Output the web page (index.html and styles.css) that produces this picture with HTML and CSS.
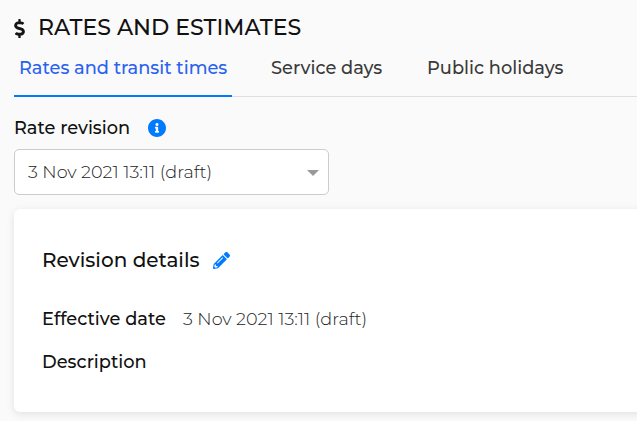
FILE: index.html
```html
<!DOCTYPE html>
<html lang="en">
<head>
	<meta charset="utf-8" />
	<title>Rates and estimates</title>
	<link rel="stylesheet" href="styles.css">
</head>
<body>

<h1 class="page-title">
	<svg class="icon-dollar" viewBox="0 0 288 512"><path d="M209.2 233.4l-108-31.6C88.7 198.2 80 186.5 80 173.5c0-16.3 13.2-29.5 29.5-29.5h66.3c12.2 0 24.2 3.7 34.2 10.5 6.1 4.1 14.3 3.1 19.5-2l34.8-34c7.1-6.9 6.1-18.4-1.8-24.5C238 74.8 207.4 64.1 176 64V16c0-8.8-7.2-16-16-16h-32c-8.8 0-16 7.2-16 16v48h-2.5C45.8 64-5.4 118.7.5 183.6c4.2 46.1 39.4 83.6 83.8 96.6l102.5 30c12.5 3.7 21.2 15.3 21.2 28.3 0 16.3-13.2 29.5-29.5 29.5h-66.3C100 368 88 364.3 78 357.5c-6.1-4.1-14.3-3.1-19.5 2l-34.8 34c-7.1 6.9-6.1 18.4 1.8 24.5 24.5 19.2 55.1 29.9 86.5 30v48c0 8.8 7.2 16 16 16h32c8.8 0 16-7.2 16-16v-48.2c46.6-.9 90.3-28.6 105.7-72.7 21.5-61.6-14.6-124.8-72.5-141.7z"/></svg>
	<span>RATES AND ESTIMATES</span>
</h1>

<nav class="tabs">
	<a class="tab tab-active">Rates and transit times</a>
	<a class="tab tab-service">Service days</a>
	<a class="tab tab-holidays">Public holidays</a>
</nav>

<div class="field-label">
	<span class="label label-rate">Rate revision</span>
	<svg class="icon-info" viewBox="8 8 496 496"><path d="M256 8C119.043 8 8 119.083 8 256c0 136.997 111.043 248 248 248s248-111.003 248-248C504 119.083 392.957 8 256 8zm0 110c23.196 0 42 18.804 42 42s-18.804 42-42 42-42-18.804-42-42 18.804-42 42-42zm56 254c0 6.627-5.373 12-12 12h-88c-6.627 0-12-5.373-12-12v-24c0-6.627 5.373-12 12-12h12v-64h-12c-6.627 0-12-5.373-12-12v-24c0-6.627 5.373-12 12-12h64c6.627 0 12 5.373 12 12v100h12c6.627 0 12 5.373 12 12v24z"/></svg>
</div>

<div class="select">
	<span class="value">3 Nov 2021 13:11 (draft)</span>
	<span class="arrow"></span>
</div>

<section class="card">
	<h2 class="card-title">
		<span>Revision details</span>
		<svg class="icon-pencil" viewBox="0 0 512 512"><path d="M497.9 142.1l-46.1 46.1c-4.7 4.7-12.3 4.7-17 0l-111-111c-4.7-4.7-4.7-12.3 0-17l46.1-46.1c18.7-18.7 49.1-18.7 67.9 0l60.1 60.1c18.8 18.7 18.8 49.1 0 67.9zM284.2 99.8L21.6 362.4.4 483.9c-2.9 16.4 11.4 30.6 27.8 27.8l121.5-21.3 262.6-262.6c4.7-4.7 4.7-12.3 0-17l-111-111c-4.8-4.7-12.4-4.7-17.1 0zM124.1 339.9c-5.5-5.5-5.5-14.3 0-19.8l154-154c5.5-5.5 14.3-5.5 19.8 0s5.5 14.3 0 19.8l-154 154c-5.5 5.5-14.3 5.5-19.8 0zM88 424h48v36.3l-64.5 11.3-31.1-31.1L51.7 376H88v48z"/></svg>
	</h2>
	<div class="row">
		<span class="label label-date">Effective date</span>
		<span class="value">3 Nov 2021 13:11 (draft)</span>
	</div>
	<div class="row">
		<span class="label label-description">Description</span>
	</div>
</section>

</body>
</html>
```

FILE: styles.css
```css
* {box-sizing: border-box;}

body {
	margin: 0;
	padding: 12px 0 0 14px;
	height: 421px;
	overflow: hidden;
	background: #fafafa;
	color: #111;
	font-family: Montserrat, Inter, sans-serif;
	font-size: 17.8px;
	font-weight: 500;
	white-space: nowrap;
}

svg {
	display: block;
	flex: none;
}

.page-title {
	display: flex;
	align-items: center;
	gap: 13px;
	margin: 0;
	height: 31px;
	font-size: 22.1px;
	font-weight: 500;
}

.icon-dollar {
	width: 11px;
	height: 19px;
	margin-top: 2px;
	fill: #151515;
}

.tabs {
	display: flex;
	height: 54px;
	border-bottom: 1px solid #e0e0e0;
}

.tab {
	height: 54px;
	padding: 0 5px;
	line-height: 50px;
	color: #3a3a3a;
}

.tab-active {
	width: 218px;
	margin-right: 34px;
	border-bottom: 2px solid #007bff;
	color: #2962f0;
}

.tab-service {
	width: 120px;
	margin-right: 36px;
}

.field-label {
	display: flex;
	align-items: center;
	height: 52px;
	padding-top: 9px;
}

.label-rate {width: 134px;}

.icon-info {
	width: 18px;
	height: 18px;
	fill: #007bff;
}

.select {
	display: flex;
	align-items: center;
	justify-content: space-between;
	width: 315px;
	height: 46px;
	padding: 0 9px 1px 13px;
	border: 1px solid #ccc;
	border-radius: 5px;
	background: #fff;
}

.value {
	font-size: 17.6px;
	font-weight: 300;
	color: #222;
}

.arrow {
	margin-top: 2px;
	border: 6px solid transparent;
	border-top-color: #999;
	border-bottom: 0;
}

.card {
	height: 203px;
	margin-top: 14px;
	margin-right: -10px;
	padding: 36px 28px 0;
	border-radius: 6px;
	background: #fff;
	box-shadow: 0 2px 8px rgba(0, 0, 0, 0.1);
}

.card-title {
	display: flex;
	align-items: center;
	gap: 13px;
	height: 30px;
	margin: 0 0 22px;
	font-size: 20px;
	font-weight: 500;
}

.icon-pencil {
	width: 17px;
	height: 17px;
	fill: #007bff;
}

.row {
	display: flex;
	align-items: center;
	height: 43px;
}

.label-date {width: 141px;}
```
